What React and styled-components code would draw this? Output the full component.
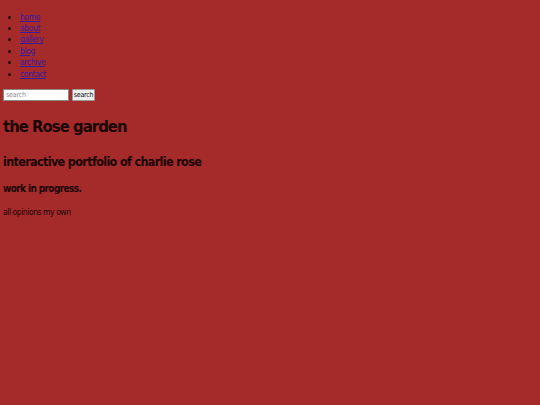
import React from 'react';
import styled, { createGlobalStyle } from 'styled-components';

const GlobalStyle = createGlobalStyle`
  html, body {
    margin: 0;
    padding: 0;
    background-color: #a52a2a;
  }
  body {
    padding: 3px;
    font-family: "DejaVu Sans Condensed", "DejaVu Sans", sans-serif;
    font-size: 8px;
    color: #1a0505;
  }
`;

const Nav = styled.ul`
  margin: 8.5px 0 0 0;
  padding-left: 17px;
  list-style: disc;
`;

const NavItem = styled.li`
  line-height: 11.4px;
  font-size: 8.5px;
  letter-spacing: -0.4px;

  a {
    color: #3a1c9e;
    text-decoration: underline;
  }
`;

const SearchForm = styled.form`
  display: flex;
  align-items: center;
  gap: 3px;
  margin-top: 9px;
`;

const SearchInput = styled.input`
  box-sizing: border-box;
  width: 66px;
  height: 12px;
  padding: 0 2px;
  border: 1px solid #8a8a8a;
  font-family: "DejaVu Sans Condensed", "DejaVu Sans", sans-serif;
  font-size: 7px;
  letter-spacing: -0.2px;
  background: #fff;
  &::placeholder { color: #8a8a8a; }
`;

const SearchButton = styled.button`
  box-sizing: border-box;
  width: 23px;
  height: 12px;
  padding: 0;
  border: 1px solid #9a9a9a;
  border-radius: 1px;
  background: #efefef;
  font-family: "DejaVu Sans Condensed", "DejaVu Sans", sans-serif;
  font-size: 7px;
  letter-spacing: -0.2px;
  color: #111;
`;

const Title = styled.h1`
  margin: 16px 0 0 0;
  font-size: 16.5px;
  letter-spacing: -0.95px;
  font-weight: bold;
`;

const Subtitle = styled.h2`
  margin: 18px 0 0 0;
  font-size: 12.5px;
  letter-spacing: -0.66px;
  font-weight: bold;
`;

const Status = styled.h3`
  margin: 14px 0 0 0;
  font-size: 10px;
  letter-spacing: -0.62px;
  font-weight: bold;
`;

const Note = styled.p`
  margin: 13px 0 0 0;
  font-size: 8.5px;
  letter-spacing: -0.45px;
`;

const links = ['home', 'about', 'gallery', 'blog', 'archive', 'contact'];

export default function App() {
  return (
    <>
      <GlobalStyle />
      <nav>
        <Nav>
          {links.map(link => (
            <NavItem key={link}><a href="#">{link}</a></NavItem>
          ))}
        </Nav>
      </nav>
      <SearchForm onSubmit={e => e.preventDefault()}>
        <SearchInput type="text" placeholder="search" />
        <SearchButton type="submit">search</SearchButton>
      </SearchForm>
      <Title>the Rose garden</Title>
      <Subtitle>interactive portfolio of charlie rose</Subtitle>
      <Status>work in progress.</Status>
      <Note>all opinions my own</Note>
    </>
  );
}
